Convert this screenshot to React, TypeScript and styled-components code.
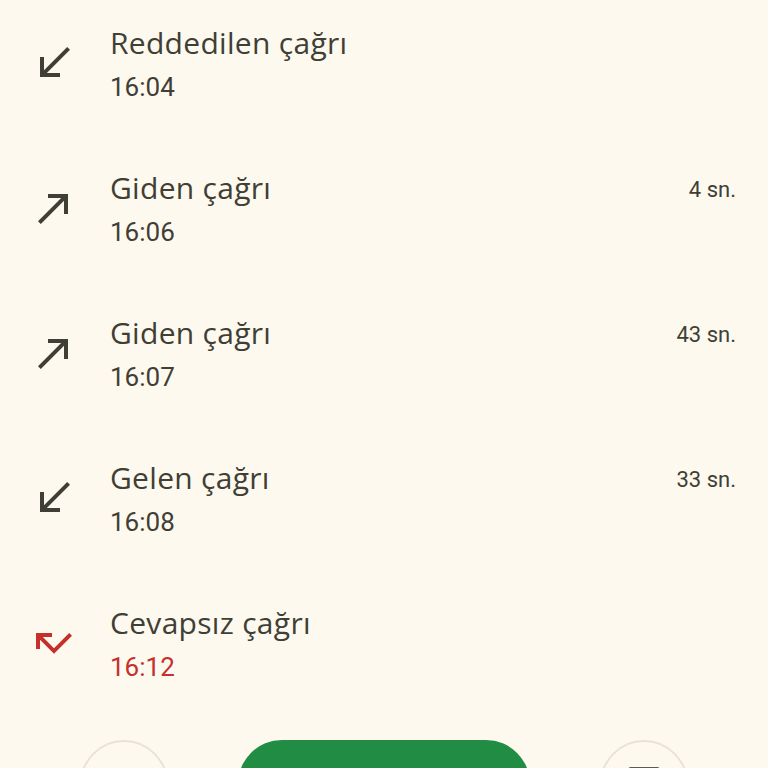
import React from 'react'
import styled, { createGlobalStyle } from 'styled-components'

type CallKind = 'in' | 'out' | 'missed'

type Call = {
  title: string,
  time: string,
  kind: CallKind,
  duration?: string
}

const calls: Call[] = [
  { title: 'Reddedilen çağrı', time: '16:04', kind: 'in' },
  { title: 'Giden çağrı', time: '16:06', kind: 'out', duration: '4 sn.' },
  { title: 'Giden çağrı', time: '16:07', kind: 'out', duration: '43 sn.' },
  { title: 'Gelen çağrı', time: '16:08', kind: 'in', duration: '33 sn.' },
  { title: 'Cevapsız çağrı', time: '16:12', kind: 'missed' },
]

const GlobalStyle = createGlobalStyle`
  html, body {
    margin: 0;
    padding: 0;
    background: #fdf9ee;
  }
  body {
    font-family: Roboto, "Noto Sans", sans-serif;
    color: #3f3f36;
  }
`

const Screen = styled.main`
  position: relative;
  width: 768px;
  height: 768px;
  overflow: hidden;
  background: #fdf9ee;
`

const List = styled.ul`
  list-style: none;
  margin: 0;
  padding: 25px 32px 0 30px;
`

const Row = styled.li`
  display: grid;
  grid-template-columns: 80px 1fr auto;
  height: 145px;
`

const IconBox = styled.div`
  width: 48px;
  height: 48px;
  margin-top: 14px;
`

const Texts = styled.div`
  display: flex;
  flex-direction: column;
`

const Title = styled.div`
  font-family: "Open Sans", Roboto, sans-serif;
  font-size: 30px;
  letter-spacing: 0.3px;
  line-height: 36px;
  color: #3f3f36;
`

const Time = styled.div<{ $missed: boolean }>`
  margin-top: 8px;
  font-size: 26px;
  line-height: 36px;
  color: ${p => (p.$missed ? '#c4302b' : '#3f3f36')};
`

const Duration = styled.div`
  font-size: 22px;
  line-height: 36px;
  margin-top: 2px;
  color: #3f3f36;
`

const ActionBar = styled.div`
  position: absolute;
  left: 0;
  right: 0;
  top: 740px;
  display: flex;
  justify-content: center;
  gap: 70px;
`

const CircleButton = styled.div`
  width: 88px;
  height: 88px;
  border-radius: 50%;
  border: 2px solid #e8e3d6;
  display: flex;
  justify-content: center;
  padding-top: 25px;
  box-sizing: border-box;
`

const CallButton = styled.div`
  width: 292px;
  height: 88px;
  border-radius: 44px;
  background: #218c43;
`

const PadIcon = styled.div`
  width: 32px;
  height: 28px;
  border-radius: 3px 3px 0 0;
  background: #5a5a52;
`

function CallIcon({ kind }: { kind: CallKind }) {
  const paths: Record<CallKind, string> = {
    in: 'M20 5.41L18.59 4 7 15.59V9H5v10h10v-2H8.41z',
    out: 'M9 5v2h6.59L4 18.59 5.41 20 17 8.41V15h2V5z',
    missed: 'M19.59 7L12 14.59 6.41 9H11V7H3v8h2v-4.59l7 7 9-9z',
  }
  return (
    <svg width="48" height="48" viewBox="0 0 24 24">
      <path d={paths[kind]} fill={kind === 'missed' ? '#c4302b' : '#3f3f36'} />
    </svg>
  )
}

function App() {
  return (
    <Screen>
      <GlobalStyle />
      <List>
        {calls.map((c, i) => (
          <Row key={i}>
            <IconBox>
              <CallIcon kind={c.kind} />
            </IconBox>
            <Texts>
              <Title>{c.title}</Title>
              <Time $missed={c.kind === 'missed'}>{c.time}</Time>
            </Texts>
            {c.duration && <Duration>{c.duration}</Duration>}
          </Row>
        ))}
      </List>
      <ActionBar>
        <CircleButton />
        <CallButton />
        <CircleButton>
          <PadIcon />
        </CircleButton>
      </ActionBar>
    </Screen>
  )
}

export default App
